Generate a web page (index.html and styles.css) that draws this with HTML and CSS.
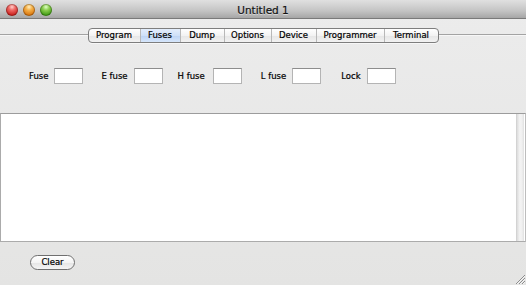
FILE: index.html
```html
<!DOCTYPE html>
<html>
<head>
<meta charset="utf-8">
<link rel="stylesheet" href="styles.css">
</head>
<body>
<div class="window">
  <div class="titlebar">
    <div class="lights">
      <span class="light red"></span>
      <span class="light yellow"></span>
      <span class="light green"></span>
    </div>
    <div class="title">Untitled 1</div>
    <div></div>
  </div>
  <div class="tabbar">
    <div class="segmented">
      <span class="seg w-program">Program</span>
      <span class="seg w-fuses selected">Fuses</span>
      <span class="seg w-dump">Dump</span>
      <span class="seg w-options">Options</span>
      <span class="seg w-device">Device</span>
      <span class="seg w-programmer">Programmer</span>
      <span class="seg w-terminal">Terminal</span>
    </div>
  </div>
  <div class="fields">
    <label class="field f1">Fuse <span class="box"></span></label>
    <label class="field f2">E fuse <span class="box"></span></label>
    <label class="field f3">H fuse <span class="box"></span></label>
    <label class="field f4">L fuse <span class="box"></span></label>
    <label class="field f5">Lock <span class="box"></span></label>
  </div>
  <div class="output">
    <div class="text"></div>
    <div class="scroller"></div>
  </div>
  <div class="footer">
    <button class="clear">Clear</button>
    <svg class="grip" width="10" height="10" viewBox="0 0 10 10">
      <path d="M10 1 L1 10 M10 4 L4 10 M10 7 L7 10" stroke="#8c8c8c" stroke-width="1"/>
      <path d="M10 2 L2 10 M10 5 L5 10 M10 8 L8 10" stroke="#f4f4f4" stroke-width="1"/>
    </svg>
  </div>
</div>
</body>
</html>
```
FILE: styles.css
```css
* { box-sizing: border-box; }
html, body { margin: 0; padding: 0; }
body {
  width: 526px;
  height: 285px;
  overflow: hidden;
  background: #e6e6e6;
  font-family: "DejaVu Sans", "Lucida Grande", sans-serif;
  color: #000;
}
.window {
  display: flex;
  flex-direction: column;
  height: 285px;
  background: linear-gradient(#ececec, #e4e4e3);
}
.titlebar {
  height: 19px;
  display: grid;
  grid-template-columns: 1fr auto 1fr;
  align-items: center;
  background: linear-gradient(#e0e0e0, #c4c4c4 60%, #a6a6a6);
  border-bottom: 1px solid #7a7a7a;
}
.lights {
  display: flex;
  gap: 5px;
  padding-left: 6px;
  padding-top: 1px;
}
.light {
  width: 12px;
  height: 12px;
  border-radius: 50%;
  box-shadow: inset 0 0 0 1px rgba(0,0,0,0.25);
}
.red { background: radial-gradient(circle at 50% 25%, #ffd0cc 0, #f06a66 30%, #c91f1c 75%, #ee6a60 100%); }
.yellow { background: radial-gradient(circle at 50% 25%, #ffefc0 0, #f5b24b 30%, #d9740c 75%, #f5c060 100%); }
.green { background: radial-gradient(circle at 50% 25%, #e0ffc8 0, #8fd052 30%, #3f9a14 75%, #a6dc70 100%); }
.title {
  font-size: 10.5px;
  color: #111;
  -webkit-text-stroke: 0.2px #111;
  text-shadow: 0 1px 0 rgba(255,255,255,0.5);
  padding-top: 1px;
}
.tabbar {
  display: flex;
  justify-content: center;
  padding-top: 9px;
  background: linear-gradient(to bottom, transparent 15px, #a3a3a3 15px, #a3a3a3 16px, #f7f7f7 16px, #f7f7f7 17px, transparent 17px);
}
.segmented {
  display: flex;
  height: 15px;
  border: 1px solid #7e7e7e;
  border-radius: 4px;
  overflow: hidden;
  background: linear-gradient(#ffffff, #f3f3f3 50%, #e6e6e6 51%, #f2f2f2);
  box-shadow: 0 1px 0 rgba(255,255,255,0.6);
}
.seg {
  display: flex;
  align-items: center;
  justify-content: center;
  font-size: 8.5px;
  color: #000;
  -webkit-text-stroke: 0.2px #000;
  border-left: 1px solid #b8b8b8;
  line-height: 1;
}
.seg:first-child { border-left: none; }
.seg.selected {
  background: linear-gradient(#e4eefc, #cfe0f8 50%, #bcd3f4 51%, #d6e6fb);
}
.w-program { width: 51px; }
.w-fuses { width: 40px; }
.w-dump { width: 44px; }
.w-options { width: 47px; }
.w-device { width: 45px; }
.w-programmer { width: 68px; }
.w-terminal { width: 54px; }
.fields {
  display: flex;
  align-items: flex-start;
  padding: 25px 0 0 29px;
  height: 70px;
}
.field {
  display: flex;
  align-items: center;
  gap: 6px;
  font-size: 8.5px;
  color: #000;
  -webkit-text-stroke: 0.2px #000;
}
.f1 { margin-right: 18px; }
.f2 { margin-right: 15px; }
.f3 { margin-right: 19px; gap: 8px; }
.f4 { margin-right: 20px; }
.box {
  display: block;
  width: 29px;
  height: 16px;
  background: #fff;
  border: 1px solid #b4b4b4;
  border-top-color: #8d8d8d;
}
.output {
  display: flex;
  height: 129px;
  background: #fff;
  border: 1px solid #ababab;
  border-right: 1px solid #bdbdbd;
  border-top-color: #9c9c9c;
}
.text { flex: 1; }
.scroller {
  width: 8px;
  margin-right: 1px;
  background: linear-gradient(to right, #dcdcdc, #f4f4f4 40%, #f0f0f0 70%, #e0e0e0);
  border-left: 1px solid #d3d3d3;
}
.footer {
  flex: 1;
  display: flex;
  justify-content: space-between;
  align-items: flex-start;
  padding: 13px 1px 1px 30px;
}
.clear {
  width: 45px;
  height: 15px;
  padding: 0;
  border: 1px solid #6f6f6f;
  border-radius: 8px;
  background: linear-gradient(#ffffff, #f4f4f4 50%, #e5e5e5 51%, #f5f5f5);
  font-family: "DejaVu Sans", sans-serif;
  font-size: 8.5px;
  color: #000;
  -webkit-text-stroke: 0.2px #000;
  line-height: 13px;
}
.grip { align-self: flex-end; }
```
